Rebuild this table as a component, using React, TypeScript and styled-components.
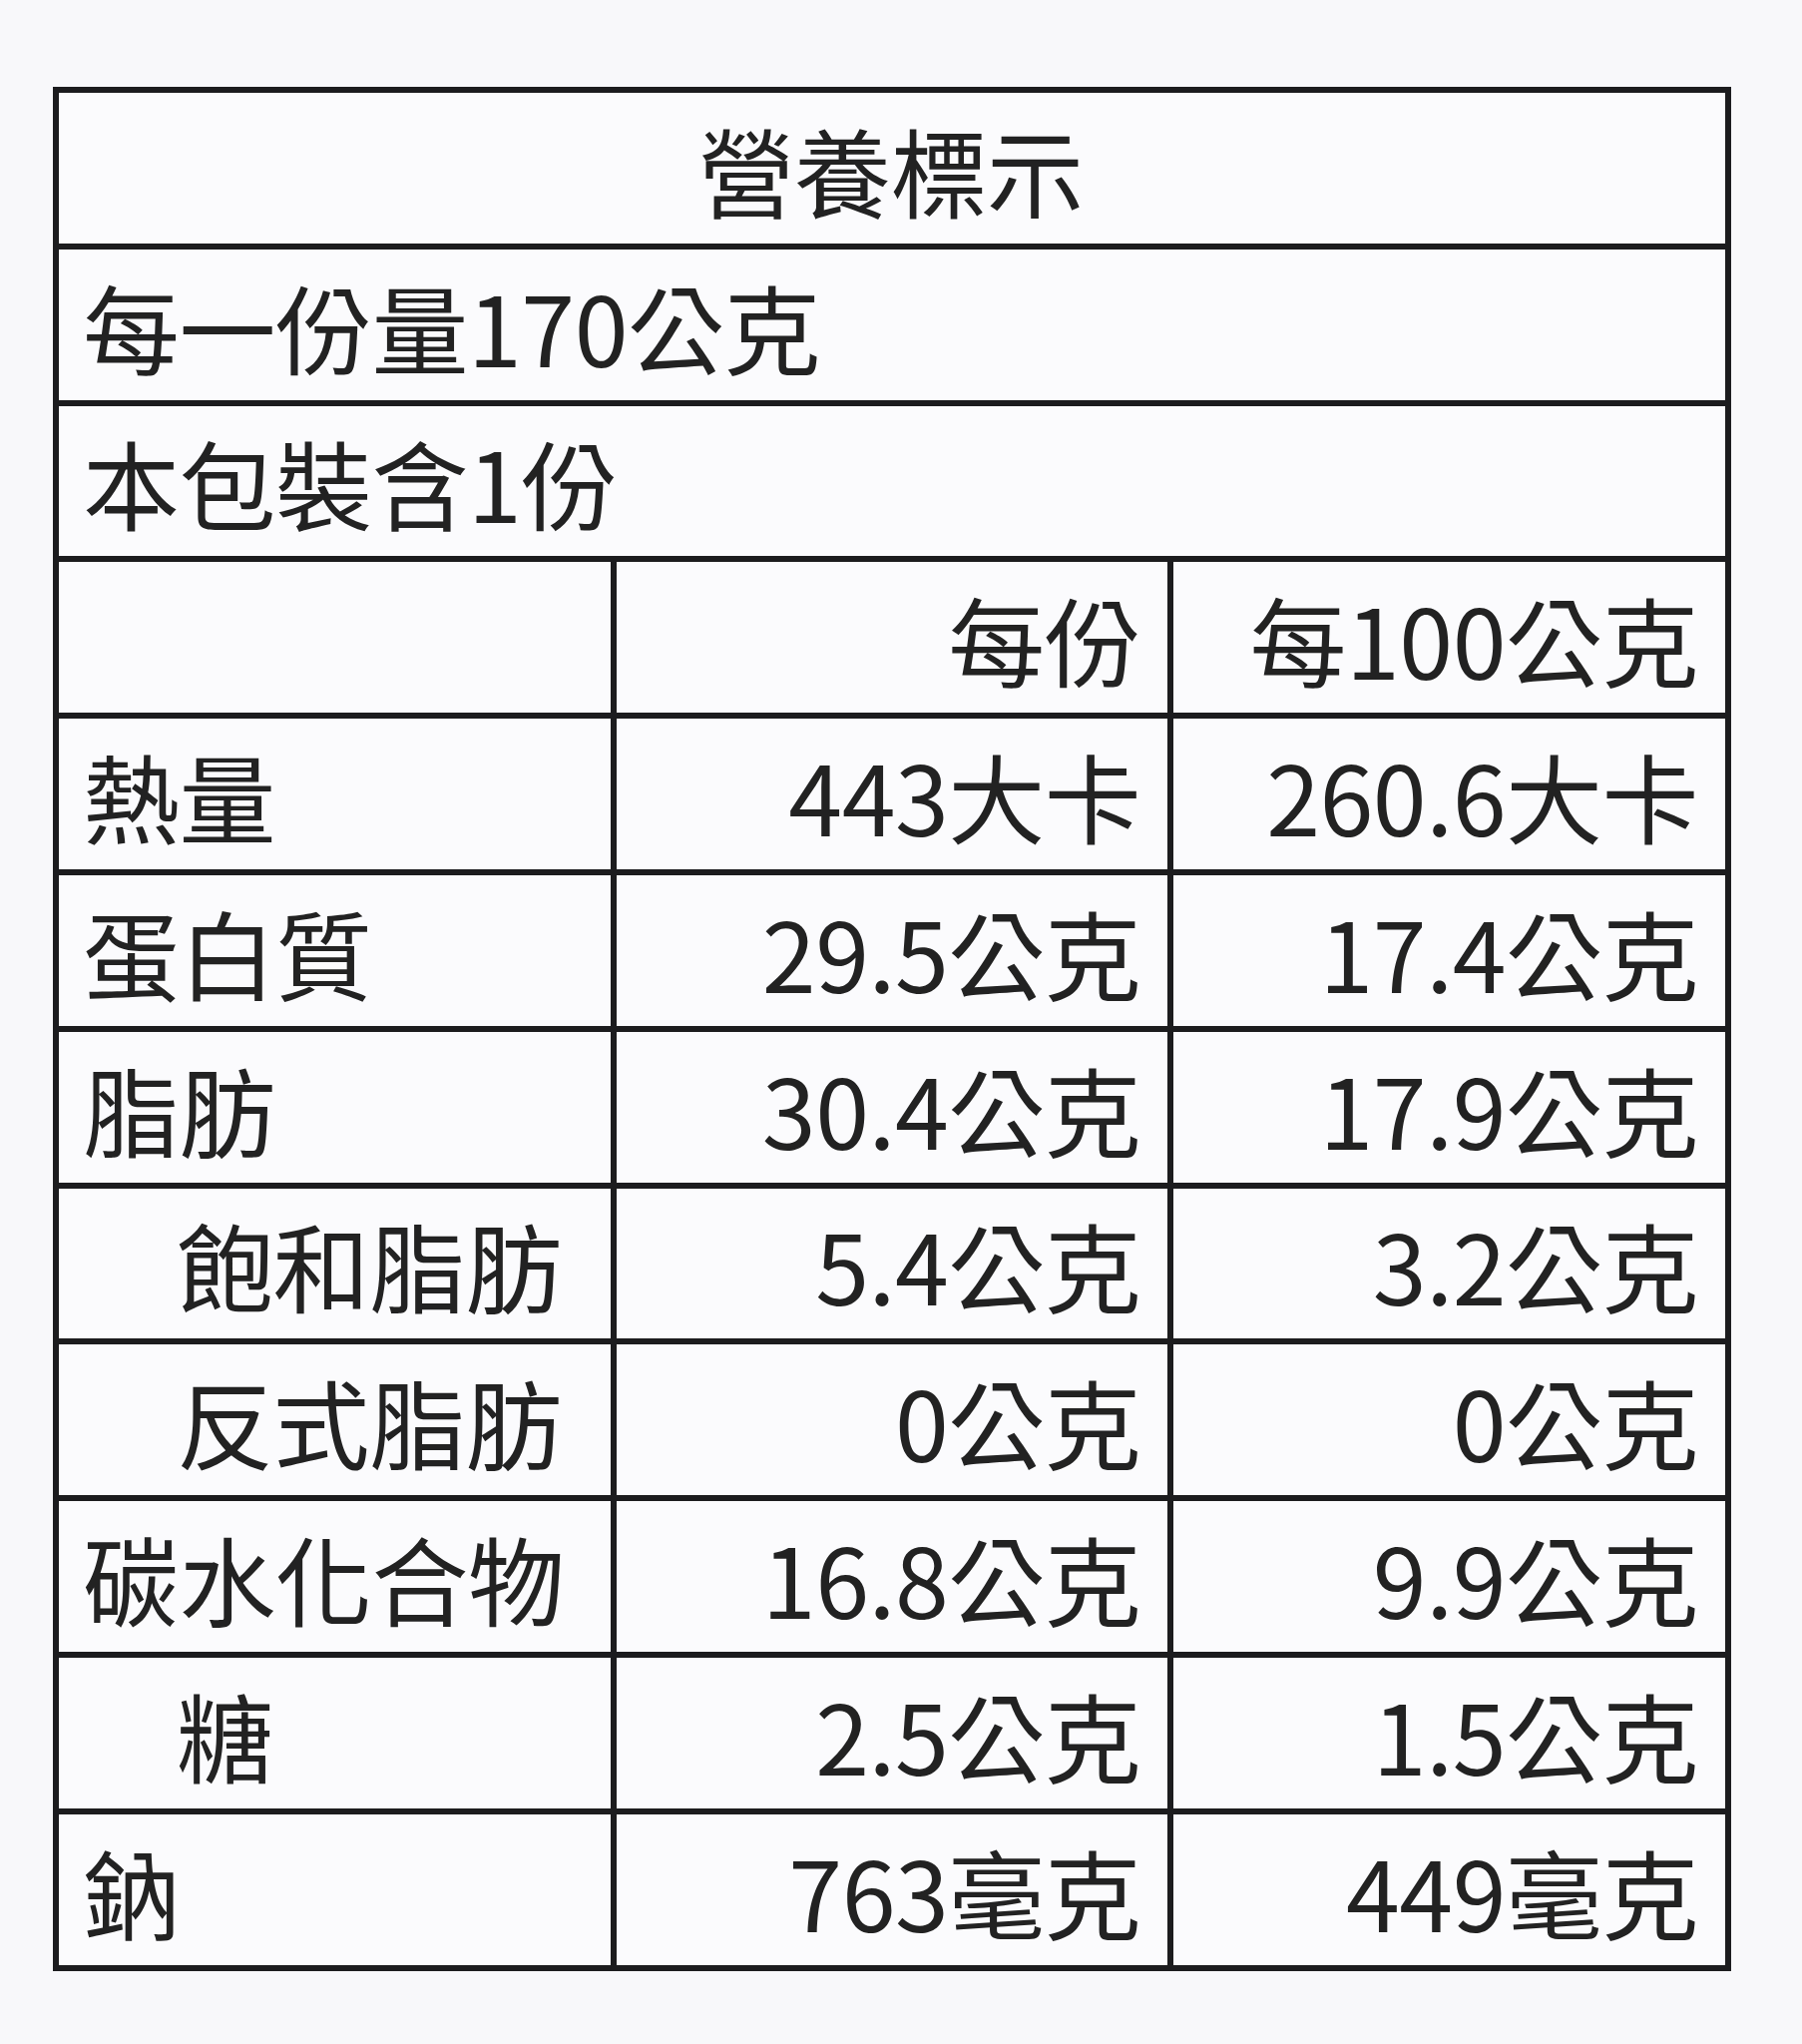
import React from 'react';
import styled, { createGlobalStyle } from 'styled-components';

const GlobalStyle = createGlobalStyle`
  html, body {
    margin: 0;
    padding: 0;
    background: #f8f8fa;
  }
  body {
    font-family: "Noto Sans CJK TC", "Noto Sans", sans-serif;
    color: #222;
  }
`;

const Page = styled.div`
  width: 1806px;
  height: 2048px;
  padding: 87px 0 0 53px;
  box-sizing: border-box;
`;

const Label = styled.div`
  width: 1682px;
  display: grid;
  grid-template-columns: 1fr 1fr 1fr;
  grid-auto-rows: 150.8px;
  gap: 6px;
  padding: 6px;
  box-sizing: border-box;
  background: #1c1c1e;
`;

const Cell = styled.div<{ $span?: number; $align?: 'left' | 'right' | 'center'; $indent?: boolean }>`
  grid-column: span ${({ $span }) => $span ?? 1};
  background: #fbfbfd;
  display: flex;
  align-items: center;
  justify-content: ${({ $align }) =>
    $align === 'right' ? 'flex-end' : $align === 'center' ? 'center' : 'flex-start'};
  padding: 0 27px 0 ${({ $indent }) => ($indent ? '118px' : '24px')};
  box-sizing: border-box;
  font-size: 97px;
  line-height: 1;
  white-space: nowrap;
  letter-spacing: -0.5px;
`;

const rows = [
  { name: '熱量', perServing: '443大卡', per100: '260.6大卡' },
  { name: '蛋白質', perServing: '29.5公克', per100: '17.4公克' },
  { name: '脂肪', perServing: '30.4公克', per100: '17.9公克' },
  { name: '飽和脂肪', perServing: '5.4公克', per100: '3.2公克', indent: true },
  { name: '反式脂肪', perServing: '0公克', per100: '0公克', indent: true },
  { name: '碳水化合物', perServing: '16.8公克', per100: '9.9公克' },
  { name: '糖', perServing: '2.5公克', per100: '1.5公克', indent: true },
  { name: '鈉', perServing: '763毫克', per100: '449毫克' },
];

const App: React.FC = () => {
  return (
    <>
      <GlobalStyle />
      <Page>
        <Label>
          <Cell $span={3} $align="center">營養標示</Cell>
          <Cell $span={3}>每一份量170公克</Cell>
          <Cell $span={3}>本包裝含1份</Cell>
          <Cell />
          <Cell $align="right">每份</Cell>
          <Cell $align="right">每100公克</Cell>
          {rows.map((row) => (
            <React.Fragment key={row.name}>
              <Cell $indent={row.indent}>{row.name}</Cell>
              <Cell $align="right">{row.perServing}</Cell>
              <Cell $align="right">{row.per100}</Cell>
            </React.Fragment>
          ))}
        </Label>
      </Page>
    </>
  );
};

export default App;
